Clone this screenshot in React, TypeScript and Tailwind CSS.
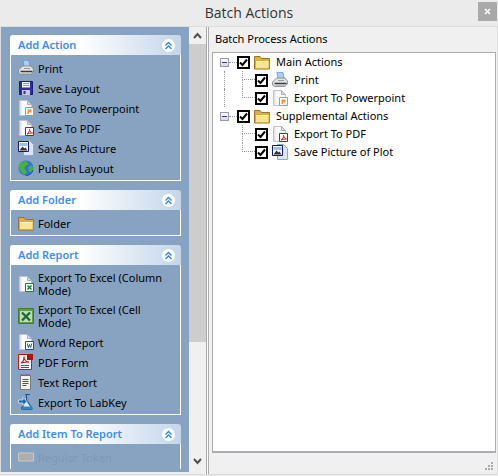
import React from "react";

const Doc = ({ children }: { children?: React.ReactNode }) => (
  <>
    <path d="M1.500 .5h8l4 4v11h-12z" fill="#fbfbfb" stroke="#c4c4c4" />
    <path d="M2 1h1.500v14H2z" fill="#e2e2e2" />
    <path d="M9.500 .5v4h4z" fill="#d8d8d8" stroke="#b0b0b0" />
    {children}
  </>
);

const Icons: Record<string, React.ReactNode> = {
  print: (
    <>
      <path d="M5 0l6 .5 1 6H6z" fill="#a8d0f4" stroke="#5d96cc" strokeWidth=".8" />
      <path d="M.5 10l4-4h8.500l2.500 3v3l-3 2.500H3L.5 13z" fill="#dfe1e5" stroke="#7d7d7d" strokeWidth=".8" />
      <path d="M6 8.500h6" stroke="#9a9a9a" />
      <path d="M2.500 11.500h12" stroke="#3a3a3a" strokeWidth="1.500" />
      <path d="M3.500 14h9" stroke="#9a9a9a" />
    </>
  ),
  save: (
    <>
      <path d="M1.500 1.500h13v13h-13z" fill="#2f2f9c" stroke="#1d1d78" />
      <path d="M4 2h8v5.500H4z" fill="#f3f3ff" />
      <path d="M5 3.500h6M5 5.500h6" stroke="#9a9ac8" />
      <path d="M4 10h8v5H4z" fill="#c8c8dc" />
      <path d="M5.500 11h2v3h-2z" fill="#30309a" />
    </>
  ),
  ppt: (
    <Doc>
      <path d="M7.500 7.500h8v8h-8z" fill="#fff" stroke="#e08d3c" />
      <path d="M9.500 9.500h4v3h-2.500V14H9.500z" fill="#e8973f" />
    </Doc>
  ),
  pdf: (
    <Doc>
      <path d="M7.500 7.500h8v8h-8z" fill="#fff" stroke="#9c1c1c" />
      <path d="M9 14c2-1 2.500-3 2.500-4.500.5 2 1.500 3 3 3.500-2 0-4 .3-5.500 1z" fill="none" stroke="#d22020" />
    </Doc>
  ),
  picture: (
    <>
      <path d="M5.500 .5h6l4 4v11h-10z" fill="#dbe6fb" stroke="#8da6d4" />
      <path d="M.5 1.500h10v10H.5z" fill="#fff" stroke="#15157c" />
      <path d="M1.500 10.500l3-4 2 2 1-1 2 3z" fill="#333" />
      <path d="M1.500 3h8v3h-8z" fill="#9cc0e8" />
    </>
  ),
  globe: (
    <>
      <circle cx="8" cy="8" r="7.500" fill="#2a78d8" />
      <path d="M4 2c3-1.500 6-1 6 1.500S6.500 6 6.500 8s2.500 2 2 4-2.500 3-3.500 2-3-4-4-6 1-5 3-6zM11.500 6c2-1 3.500 0 3.500 2s-1 4-3 4-1.500-5-.5-6z" fill="#4cb03a" />
      <path d="M8 15.500c3 0 6-2 7-5" stroke="#1a4f9c" fill="none" />
    </>
  ),
  folder: (
    <>
      <path d="M.5 2.500h5.500l1.500 2h8v10.500H.5z" fill="#dcae48" stroke="#9a7624" />
      <path d="M1.500 6.500h13.500V14.500H1.500z" fill="#fbe48f" stroke="#cfa53f" strokeWidth=".8" />
      <path d="M2 7.500h12.500" stroke="#fff4c4" />
    </>
  ),
  excelDoc: (
    <Doc>
      <path d="M7.500 7.500h8v8h-8z" fill="#fff" stroke="#1f7a34" />
      <path d="M9.500 9.500h4v4h-4z" fill="#bcdcc0" />
      <path d="M9.500 9.500l4 4M13.500 9.500l-4 4" stroke="#1f7a34" strokeWidth="1.200" />
    </Doc>
  ),
  excel: (
    <>
      <path d="M.5 .5h15v15H.5z" fill="#5d9a53" stroke="#3f7a3a" />
      <path d="M2 3h12v11H2z" fill="#bfdcb1" />
      <path d="M4 4.500l8 8M12 4.500l-8 8" stroke="#1e6a2c" strokeWidth="2.400" />
    </>
  ),
  word: (
    <Doc>
      <path d="M7.500 7.500h8v8h-8z" fill="#fff" stroke="#1d4fa0" />
      <path d="M9.300 9.500l1.100 4 1.100-3 1.100 3 1.100-4" fill="none" stroke="#1d4fa0" />
    </Doc>
  ),
  pdfForm: (
    <>
      <path d="M.5 .5h13v15H.5z" fill="#fff" stroke="#c81414" />
      <path d="M3 9c2-1 3-3 3-6.500 0 3 2 5.500 5 5.500-3 0-5 .3-8 1z" fill="none" stroke="#d01818" strokeWidth="1.200" />
      <path d="M3 11.500h8M3 13.500h8" stroke="#555" />
      <path d="M9 0h6v6H9z" fill="#b01010" />
    </>
  ),
  text: (
    <>
      <path d="M2.500 1.500h10v14h-10z" fill="#f4f4e6" stroke="#7a7a7a" />
      <path d="M2.500 1h10" stroke="#5a5a9a" strokeWidth="2" strokeDasharray="1 1" />
      <path d="M4.500 5.500h6M4.500 7.500h6M4.500 9.500h6M4.500 11.500h4" stroke="#555" />
    </>
  ),
  labkey: (
    <>
      <path d="M7 .5h5M8.500 1v5l5 7.500c.5 1-.2 2-1 2H5c-1 0-2-1-1-2l2-3" fill="#dbeafa" stroke="#1d5a90" strokeWidth="1.200" />
      <path d="M5 12.500h9l1 3H4z" fill="#2e86c8" />
      <path d="M.5 6h4.500V3.500l4 4-4 4V9H.5z" fill="#1c6cb0" stroke="#fff" strokeWidth=".6" />
    </>
  ),
  token: <path d="M.5 4h15v8H.5z" fill="#aeaeae" stroke="#c8c8c8" />,
};

const Icon = ({ name }: { name: string }) => (
  <svg width="16" height="16" viewBox="0 0 16 16" className="shrink-0">
    {Icons[name]}
  </svg>
);

const Row = ({ icon, label, tall, disabled }: { icon: string; label: string; tall?: boolean; disabled?: boolean }) => (
  <div className={`flex items-center gap-[4px] pl-[7px] pr-1 ${tall ? "h-[32px]" : "h-[20px]"}`}>
    <Icon name={icon} />
    <span className={`w-[135px] leading-[13px] ${disabled ? "text-[#7e97b5]" : "text-black"}`}>{label}</span>
  </div>
);

const Card = ({ title, children, clip }: { title: string; children: React.ReactNode; clip?: boolean }) => (
  <div className={`w-[171px] shrink-0 ${clip ? "" : "mb-[9px]"}`}>
    <div className="flex h-[20px] items-center justify-between rounded-t-[3px] bg-gradient-to-r from-white from-40% to-[#c4d6ea] pl-[8px] pr-[6px]">
      <span className="text-[11px] font-semibold text-[#3b8df2]">{title}</span>
      <span className="flex h-[13px] w-[13px] items-center justify-center rounded-full bg-white">
        <svg width="9" height="9" viewBox="0 0 9 9" fill="none" stroke="#2f86e0" strokeWidth="1.300">
          <path d="M1.500 4.500L4.500 1.500l3 3M1.500 8L4.500 5l3 3" />
        </svg>
      </span>
    </div>
    <div className={`border-x border-white ${clip ? "" : "border-b"} pb-[2px] pt-[3px]`}>{children}</div>
  </div>
);

const Check = () => (
  <span className="flex h-[13px] w-[13px] shrink-0 items-center justify-center border-2 border-black bg-white">
    <svg width="9" height="9" viewBox="0 0 9 9" fill="none" stroke="#000" strokeWidth="2">
      <path d="M1 4.500l2.500 2.500L8 1.500" />
    </svg>
  </span>
);

const Parent = ({ label }: { label: string }) => (
  <div className="flex h-[18px] items-center">
    <span className="flex h-[9px] w-[9px] shrink-0 items-center justify-center border border-[#9a9aa6] bg-gradient-to-b from-white to-[#d4d8e0]">
      <span className="h-px w-[5px] bg-[#35359a]" />
    </span>
    <span className="w-[8px] shrink-0 border-t border-dotted border-[#999]" />
    <Check />
    <span className="ml-[4px]">
      <Icon name="folder" />
    </span>
    <span className="ml-[6px] text-black">{label}</span>
  </div>
);

const Child = ({ icon, label, cont, last }: { icon: string; label: string; cont?: boolean; last?: boolean }) => (
  <div className="ml-[4px] flex h-[18px] items-center">
    <span className={`h-full w-[18px] shrink-0 border-dotted border-[#999] ${cont ? "border-l" : ""}`} />
    <span className="flex h-full w-[13px] shrink-0 flex-col">
      <span className="h-[9px] border-b border-l border-dotted border-[#999]" />
      <span className={`flex-1 border-dotted border-[#999] ${last ? "" : "border-l"}`} />
    </span>
    <Check />
    <span className="ml-[4px]">
      <Icon name={icon} />
    </span>
    <span className="ml-[6px] text-black">{label}</span>
  </div>
);

export default function App() {
  return (
    <div className="flex h-[476px] w-[498px] flex-col overflow-hidden bg-[#ebebeb] text-[11px]" style={{ fontFamily: '"Noto Sans", sans-serif' }}>
      <div className="relative flex h-[26px] shrink-0 items-center justify-center pb-[2px]">
        <span className="text-[14px] text-[#333]" style={{ fontFamily: '"Open Sans", sans-serif' }}>Batch Actions</span>
        <span className="absolute right-[1px] top-[2px] flex h-[19px] w-[19px] items-center justify-center bg-[#a9a9a9]">
          <svg width="7" height="7" viewBox="0 0 7 7" fill="none" stroke="#fff" strokeWidth="1.600">
            <path d="M1 1l5 5M6 1L1 6" />
          </svg>
        </span>
      </div>
      <div className="mb-[1px] flex min-h-0 flex-1 border-y border-r border-[#dcdcdc] bg-[#f0f0f0]">
        <div className="flex h-[445px] w-[189px] shrink-0 flex-col overflow-hidden border-l border-[#dcdcdc] bg-[#88a3c2] pl-[9px] pt-[8px]">
          <Card title="Add Action">
            <Row icon="print" label="Print" />
            <Row icon="save" label="Save Layout" />
            <Row icon="ppt" label="Save To Powerpoint" />
            <Row icon="pdf" label="Save To PDF" />
            <Row icon="picture" label="Save As Picture" />
            <Row icon="globe" label="Publish Layout" />
          </Card>
          <Card title="Add Folder">
            <Row icon="folder" label="Folder" />
          </Card>
          <Card title="Add Report">
            <Row icon="excelDoc" label="Export To Excel (Column Mode)" tall />
            <Row icon="excel" label="Export To Excel (Cell Mode)" tall />
            <Row icon="word" label="Word Report" />
            <Row icon="pdfForm" label="PDF Form" />
            <Row icon="text" label="Text Report" />
            <Row icon="labkey" label="Export To LabKey" />
          </Card>
          <Card title="Add Item To Report" clip>
            <Row icon="token" label="Regular Token" disabled />
          </Card>
        </div>
        <div className="flex w-[17px] shrink-0 flex-col items-center bg-[#f0f0f0]">
          <div className="flex h-[17px] w-full items-center justify-center">
            <svg width="9" height="7" viewBox="0 0 9 7" fill="none" stroke="#505050" strokeWidth="2">
              <path d="M1 6l3.500-4L8 6" />
            </svg>
          </div>
          <div className="h-[298px] w-full bg-[#cdcdcd]" />
          <div className="flex-1" />
          <div className="flex h-[26px] w-full items-center justify-center">
            <svg width="9" height="7" viewBox="0 0 9 7" fill="none" stroke="#505050" strokeWidth="2">
              <path d="M1 1l3.500 4L8 1" />
            </svg>
          </div>
        </div>
        <div className="w-[3px] shrink-0 border-x border-[#ababab] bg-white" />
        <div className="flex min-w-0 flex-1 flex-col pl-[3px] pr-[1px]">
          <div className="flex h-[25px] shrink-0 items-center pb-[1px] pl-[3px] pt-[1px] text-black">Batch Process Actions</div>
          <div className="h-[401px] border border-b-2 border-[#acacb0] bg-white pl-[7px]">
            <Parent label="Main Actions" />
            <Child icon="print" label="Print" cont />
            <Child icon="ppt" label="Export To Powerpoint" cont last />
            <Parent label="Supplemental Actions" />
            <Child icon="pdf" label="Export To PDF" />
            <Child icon="picture" label="Save Picture of Plot" last />
          </div>
          <div className="flex flex-1 items-end justify-end pb-[3px] pr-[2px]">
            <svg width="9" height="9" viewBox="0 0 9 9" fill="#ababab">
              <path d="M6 0h2v2H6zM3 3h2v2H3zM6 3h2v2H6zM0 6h2v2H0zM3 6h2v2H3zM6 6h2v2H6z" />
            </svg>
          </div>
        </div>
      </div>
    </div>
  );
}
